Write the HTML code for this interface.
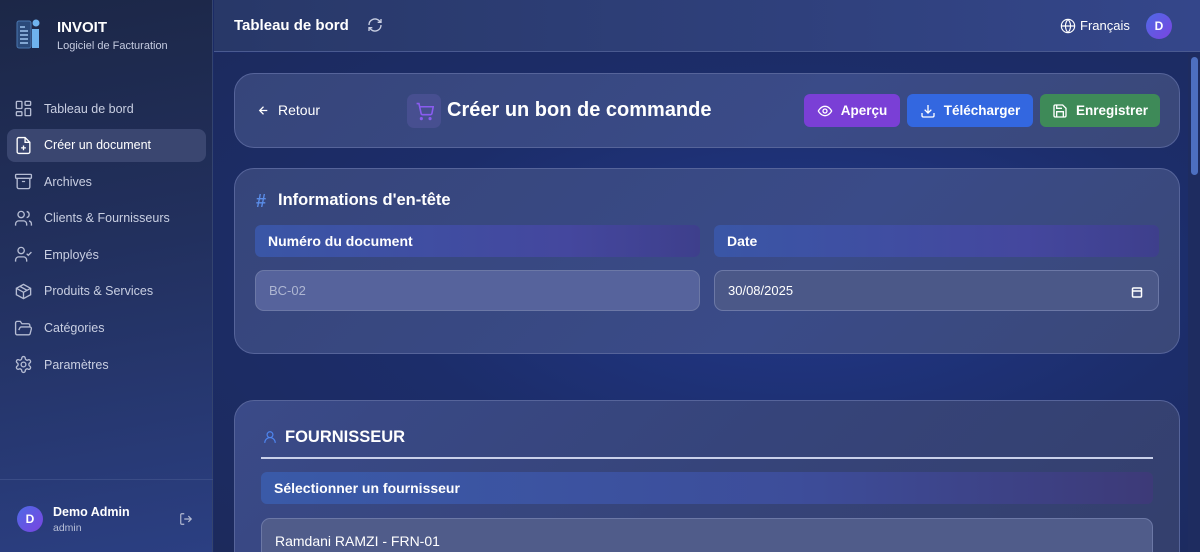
<!DOCTYPE html>
<html><head><meta charset="utf-8"><style>
*{box-sizing:border-box;margin:0;padding:0}
html{width:1200px;height:552px;overflow:hidden;background:#1b2b66}
body{width:1200px;height:552px;overflow:hidden;font-family:"Liberation Sans",sans-serif;color:#fff;background:#1b2b66;position:relative}
.side{position:absolute;left:0;top:0;width:213px;height:552px;background:linear-gradient(170deg,#1c2747 0%,#22305e 45%,#2b3f82 100%);border-right:1px solid #34446f}
.logo{position:absolute;left:16px;top:18px}
.brand{position:absolute;left:57px;top:19px;font-weight:bold;font-size:15px}
.sub{position:absolute;left:57px;top:40px;font-size:11px;color:#c5cbe0}
.nav{position:absolute;left:7px;top:92px;width:199px}
.it{height:33px;margin-bottom:3.6px;display:flex;align-items:center;padding-left:7px;font-size:12.5px;color:#c9cfe2;border-radius:8px}
.it svg{width:19px;height:19px;margin-right:11px;stroke:#b5bcd3;fill:none;stroke-width:1.7}
.it.on{background:#3a4670;color:#fff}
.it.on svg{stroke:#fff}
.foot{position:absolute;left:0;top:479px;width:213px;border-top:1px solid #3a4c86;height:73px}
.av{width:26px;height:26px;border-radius:50%;background:linear-gradient(135deg,#4e6ae6,#7a44e0);display:flex;align-items:center;justify-content:center;font-size:12px;font-weight:bold}
.top{position:absolute;left:214px;top:0;width:986px;height:52px;background:linear-gradient(90deg,#283868,#34468a);border-bottom:1px solid #4a5a90}
.main{position:absolute;left:214px;top:53px;width:974px;height:499px;overflow:hidden;background:radial-gradient(ellipse at 60% 45%,#22388a 0%,#1c2d6a 50%,#1c2a5c 100%)}
.card{position:absolute;left:20px;width:946px;border-radius:20px;background:linear-gradient(135deg,#36457a,#3a4b88 60%,#3a4878);border:1px solid #56649a}
.btn{position:absolute;top:20px;height:33px;border-radius:6px;display:flex;align-items:center;justify-content:center;font-size:13.5px;font-weight:bold}
.btn svg{width:16px;height:16px;margin-right:8px;stroke:#fff;fill:none;stroke-width:2}
.lab{position:absolute;height:32px;border-radius:6px;background:linear-gradient(90deg,#3a56a6,#44479e 70%,#3e3f8c);font-weight:bold;font-size:14px;padding-left:13px;line-height:32px}
.inp{position:absolute;height:41px;border-radius:9px;border:1px solid #6c78a6;font-size:13px;padding-left:13px;line-height:40px}
.scroll{position:absolute;left:1188px;top:53px;width:12px;height:499px;background:#1e2c60}
</style></head><body>
<div class="side">
<svg class="logo" width="26" height="32" viewBox="0 0 26 32"><rect x="1" y="3" width="14" height="27" rx="2" fill="#2b4a7a" stroke="#4a77b0"/><path d="M4 9h5M4 13h8M4 17h8M4 21h8M4 25h8" stroke="#9fc4ef" stroke-width="1.5"/><circle cx="20" cy="5" r="3.5" fill="#6fb3ee"/><rect x="16" y="11" width="7" height="19" fill="#6fb3ee"/></svg>
<div class="brand">INVOIT</div><div class="sub">Logiciel de Facturation</div>
<div class="nav">
<div class="it"><svg viewBox="0 0 24 24"><rect x="3" y="3" width="7" height="9" rx="1"/><rect x="14" y="3" width="7" height="5" rx="1"/><rect x="14" y="12" width="7" height="9" rx="1"/><rect x="3" y="16" width="7" height="5" rx="1"/></svg>Tableau de bord</div>
<div class="it on"><svg viewBox="0 0 24 24"><path d="M14 2H6a2 2 0 0 0-2 2v16a2 2 0 0 0 2 2h12a2 2 0 0 0 2-2V8z"/><path d="M14 2v6h6M12 12v6M9 15h6"/></svg>Créer un document</div>
<div class="it"><svg viewBox="0 0 24 24"><rect x="2" y="3" width="20" height="5" rx="1"/><path d="M4 8v11a2 2 0 0 0 2 2h12a2 2 0 0 0 2-2V8M10 12h4"/></svg>Archives</div>
<div class="it"><svg viewBox="0 0 24 24"><circle cx="9" cy="7" r="4"/><path d="M2 21v-2a4 4 0 0 1 4-4h6a4 4 0 0 1 4 4v2M16 3.1a4 4 0 0 1 0 7.8M22 21v-2a4 4 0 0 0-3-3.9"/></svg>Clients &amp; Fournisseurs</div>
<div class="it"><svg viewBox="0 0 24 24"><circle cx="9" cy="7" r="4"/><path d="M2 21v-2a4 4 0 0 1 4-4h6a4 4 0 0 1 4 4v2M16 11l2 2 4-4"/></svg>Employés</div>
<div class="it"><svg viewBox="0 0 24 24"><path d="M21 8l-9-5-9 5v8l9 5 9-5z"/><path d="M3 8l9 5 9-5M12 13v8M7.5 5.5l9 5"/></svg>Produits &amp; Services</div>
<div class="it"><svg viewBox="0 0 24 24"><path d="M6 14l1.5-3A2 2 0 0 1 9.2 10H20a2 2 0 0 1 1.9 2.5l-1.5 6A2 2 0 0 1 18.5 20H4a2 2 0 0 1-2-2V5a2 2 0 0 1 2-2h4l2 3h8a2 2 0 0 1 2 2v2"/></svg>Catégories</div>
<div class="it"><svg viewBox="0 0 24 24"><circle cx="12" cy="12" r="3"/><path d="M12.2 2h-.4a2 2 0 0 0-2 2v.2a2 2 0 0 1-1 1.7l-.4.3a2 2 0 0 1-2 0l-.2-.1a2 2 0 0 0-2.7.7l-.2.4a2 2 0 0 0 .7 2.7l.2.1a2 2 0 0 1 1 1.7v.5a2 2 0 0 1-1 1.7l-.2.1a2 2 0 0 0-.7 2.7l.2.4a2 2 0 0 0 2.7.7l.2-.1a2 2 0 0 1 2 0l.4.3a2 2 0 0 1 1 1.7V20a2 2 0 0 0 2 2h.4a2 2 0 0 0 2-2v-.2a2 2 0 0 1 1-1.7l.4-.3a2 2 0 0 1 2 0l.2.1a2 2 0 0 0 2.7-.7l.2-.4a2 2 0 0 0-.7-2.7l-.2-.1a2 2 0 0 1-1-1.7v-.5a2 2 0 0 1 1-1.7l.2-.1a2 2 0 0 0 .7-2.7l-.2-.4a2 2 0 0 0-2.7-.7l-.2.1a2 2 0 0 1-2 0l-.4-.3a2 2 0 0 1-1-1.7V4a2 2 0 0 0-2-2z"/></svg>Paramètres</div>
</div>
<div class="foot">
<div class="av" style="position:absolute;left:17px;top:26px">D</div>
<div style="position:absolute;left:53px;top:25px;font-size:12.5px;font-weight:bold">Demo Admin</div>
<div style="position:absolute;left:53px;top:42px;font-size:10.5px;color:#b8bfd8">admin</div>
<svg style="position:absolute;left:179px;top:32px" width="14" height="14" viewBox="0 0 24 24" fill="none" stroke="#b5bcd3" stroke-width="2"><path d="M9 21H5a2 2 0 0 1-2-2V5a2 2 0 0 1 2-2h4M16 17l5-5-5-5M21 12H9"/></svg>
</div>
</div>
<div class="top">
<div style="position:absolute;left:20px;top:17px;font-size:15px;font-weight:bold">Tableau de bord</div>
<svg style="position:absolute;left:153px;top:17px" width="16" height="16" viewBox="0 0 24 24" fill="none" stroke="#c9cfe2" stroke-width="2"><path d="M3 12a9 9 0 0 1 15-6.7L21 8M21 3v5h-5M21 12a9 9 0 0 1-15 6.7L3 16M3 21v-5h5"/></svg>
<svg style="position:absolute;left:846px;top:18px" width="16" height="16" viewBox="0 0 24 24" fill="none" stroke="#fff" stroke-width="1.7"><circle cx="12" cy="12" r="10"/><path d="M2 12h20M12 2a15 15 0 0 1 0 20M12 2a15 15 0 0 0 0 20"/></svg>
<div style="position:absolute;left:866px;top:18px;font-size:13px">Français</div>
<div class="av" style="position:absolute;left:932px;top:13px">D</div>
</div>
<div class="main">
<div class="card" style="top:20px;height:75px">
<svg style="position:absolute;left:22px;top:30px" width="13" height="13" viewBox="0 0 24 24" fill="none" stroke="#fff" stroke-width="2.4"><path d="M19 12H5M12 19l-7-7 7-7"/></svg>
<div style="position:absolute;left:43px;top:28px;font-size:14px">Retour</div>
<div style="position:absolute;left:172px;top:20px;width:34px;height:34px;border-radius:7px;background:#474f90"></div>
<svg style="position:absolute;left:180px;top:28px" width="19" height="19" viewBox="0 0 24 24" fill="none" stroke="#8a5cf0" stroke-width="2"><circle cx="8" cy="21" r="1"/><circle cx="19" cy="21" r="1"/><path d="M2 2h3l2.7 12.4a2 2 0 0 0 2 1.6h9.7a2 2 0 0 0 2-1.6L23 6H6"/></svg>
<div style="position:absolute;left:212px;top:25px;font-size:20px;font-weight:bold">Créer un bon de commande</div>
<div class="btn" style="left:569px;width:96px;background:#7a3fd6"><svg viewBox="0 0 24 24"><path d="M2 12s3.5-7 10-7 10 7 10 7-3.5 7-10 7S2 12 2 12z"/><circle cx="12" cy="12" r="3"/></svg>Aperçu</div>
<div class="btn" style="left:672px;width:126px;background:#3367e0"><svg viewBox="0 0 24 24"><path d="M21 15v4a2 2 0 0 1-2 2H5a2 2 0 0 1-2-2v-4M7 10l5 5 5-5M12 15V3"/></svg>Télécharger</div>
<div class="btn" style="left:805px;width:120px;background:#3e8a58"><svg viewBox="0 0 24 24"><path d="M19 21H5a2 2 0 0 1-2-2V5a2 2 0 0 1 2-2h11l5 5v11a2 2 0 0 1-2 2z"/><path d="M17 21v-8H7v8M7 3v5h8"/></svg>Enregistrer</div>
</div>
<div class="card" style="top:115px;height:186px">
<div style="position:absolute;left:21px;top:22px;font-size:18px;color:#5a8de8;font-weight:bold">#</div>
<div style="position:absolute;left:43px;top:22px;font-size:16.5px;font-weight:bold">Informations d'en-tête</div>
<div class="lab" style="left:20px;top:56px;width:445px">Numéro du document</div>
<div class="lab" style="left:479px;top:56px;width:445px">Date</div>
<div class="inp" style="left:20px;top:101px;width:445px;background:#56639c;color:#aeb6d2">BC-02</div>
<div class="inp" style="left:479px;top:101px;width:445px;background:#4b5888;color:#fff">30/08/2025</div>
<svg style="position:absolute;left:896px;top:117px" width="12" height="12" viewBox="0 0 24 24" fill="none" stroke="#fff" stroke-width="3"><rect x="3" y="4" width="18" height="18" rx="2"/><path d="M3 10h18"/></svg>
</div>
<div class="card" style="top:347px;height:200px;background:linear-gradient(135deg,#3a4a88,#36447a 50%,#343f6c)">
<svg style="position:absolute;left:28px;top:29px" width="14" height="14" viewBox="0 0 24 24" fill="none" stroke="#4f86f0" stroke-width="2"><circle cx="12" cy="8" r="5"/><path d="M3 22a9 9 0 0 1 18 0"/></svg>
<div style="position:absolute;left:50px;top:27px;font-size:16.5px;font-weight:bold">FOURNISSEUR</div>
<div style="position:absolute;left:26px;top:56px;width:892px;height:2px;background:#c9d0ea"></div>
<div class="lab" style="left:26px;top:71px;width:892px;background:linear-gradient(90deg,#3a5aa8,#3d4d9a 60%,#3d3a78)">Sélectionner un fournisseur</div>
<div class="inp" style="left:26px;top:117px;width:892px;height:60px;background:#505c8a;font-size:14px;padding-top:2px">Ramdani RAMZI - FRN-01</div>
</div>
</div>
<div class="scroll"><div style="position:absolute;left:3px;top:4px;width:7px;height:118px;border-radius:4px;background:#4d6fc0"></div></div>
</body></html>
